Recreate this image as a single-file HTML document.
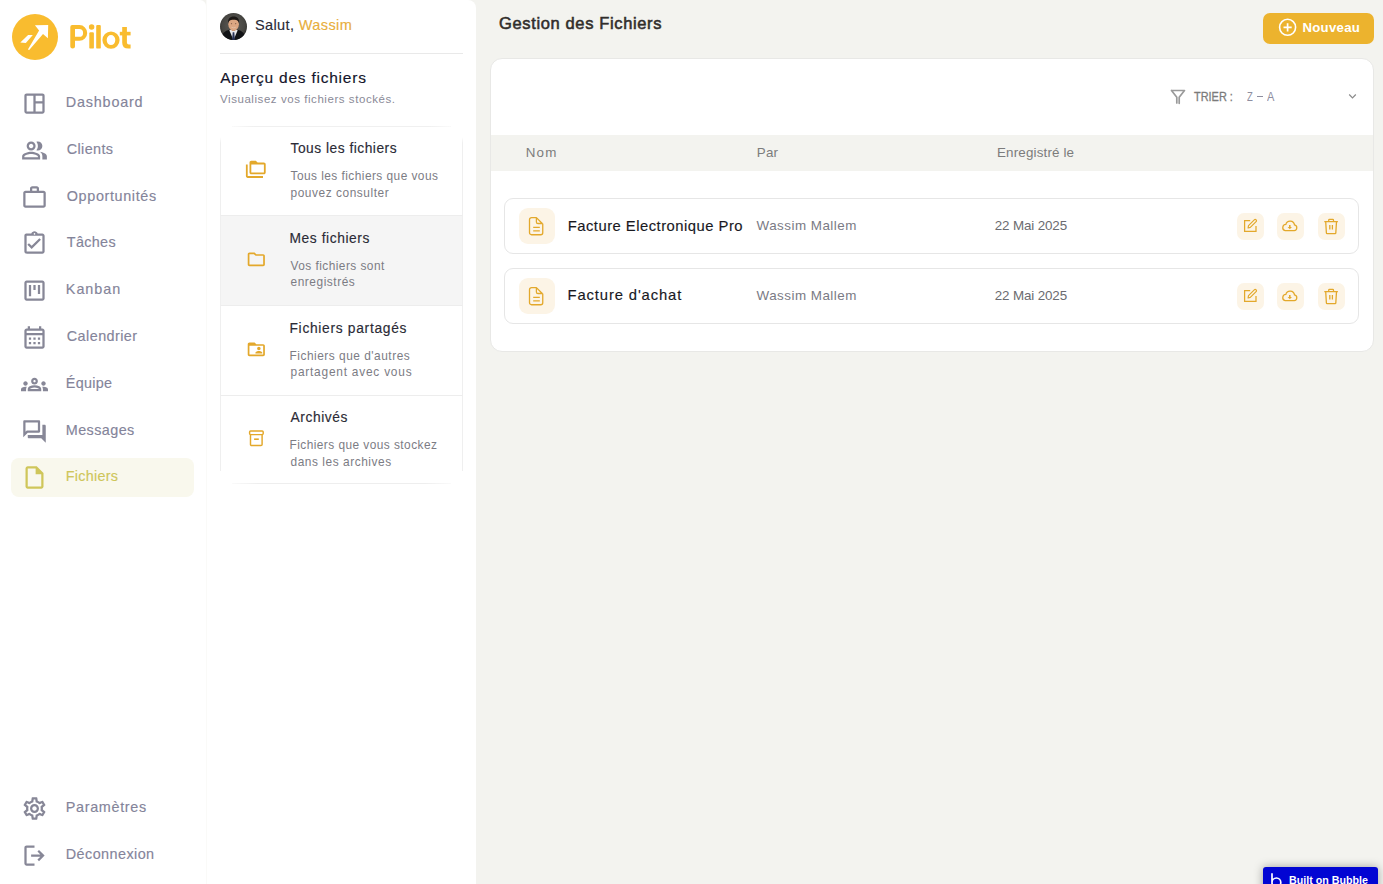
<!DOCTYPE html>
<html><head><meta charset="utf-8">
<style>
*{box-sizing:border-box;margin:0;padding:0}
html,body{width:1383px;height:884px;overflow:hidden}
body{background:#f3f3ef;position:relative;font-family:"Liberation Sans",sans-serif}
.a{position:absolute}
.t{position:absolute;white-space:nowrap;line-height:1}
svg{position:absolute;overflow:visible}
</style></head><body>
<div class="a" style="left:0;top:0;width:206px;height:884px;background:#fff;border-top-right-radius:6px"></div>
<div class="a" style="left:206px;top:0;width:270px;height:884px;background:#fff;border-top-right-radius:8px;border-left:1px solid #fafaf8"></div>
<svg style="left:12px;top:14px" width="46" height="46" viewBox="0 0 46 46">
<circle cx="23" cy="23" r="23" fill="#f9bc2f"/>
<path d="M22.9 11.2L36.2 10.9L35.9 24.2L31 20L17.2 35.9L15.9 35.4L27.1 16.6Z" fill="#fff"/>
<path d="M8.3 28.6L16.1 21.1L20.8 21.1L13.8 29.1Z" fill="#fff"/>
</svg>
<svg style="left:0;top:0" width="140" height="60" viewBox="0 0 140 60"><g fill="#f9bc2f">
<path fill-rule="evenodd" d="M70.3 46.6V27Q70.3 25.1 72.2 25.1H79.4A7.8 7.8 0 0 1 79.4 40.7H75V46.6Q75 48.6 72.7 48.6Q70.3 48.6 70.3 46.6ZM75 29V36.8H79.2A3.9 3.9 0 0 0 79.2 29Z"/>
<rect x="89.3" y="32.2" width="4.6" height="16.4" rx="1.2"/><circle cx="91.6" cy="26.9" r="2.75"/>
<rect x="96.2" y="24.9" width="4.6" height="23.7" rx="1.2"/>
<path fill-rule="evenodd" d="M102.4 40.1A8.6 8.7 0 1 0 119.6 40.1A8.6 8.7 0 1 0 102.4 40.1ZM106.7 40.1A4.3 5 0 1 0 115.3 40.1A4.3 5 0 1 0 106.7 40.1Z"/>
<path d="M122.2 26.9H126.9V42.6Q126.9 44.5 128.8 44.5H130.6V48.6H128.4Q122.2 48.6 122.2 42.4Z"/><rect x="119.8" y="31.8" width="10.8" height="3.6"/>
</g></svg>
<div class="a" style="left:11px;top:458px;width:183px;height:39px;border-radius:8px;background:#f9f8ed"></div>
<svg style="left:21.10px;top:90.00px" width="27" height="27" viewBox="0 0 24 24"><path fill="#878797" d="M5 21q-.825 0-1.413-.587Q3 19.825 3 19V5q0-.825.587-1.413Q4.175 3 5 3h14q.825 0 1.413.587Q21 4.175 21 5v14q0 .825-.587 1.413Q19.825 21 19 21Zm6-2V5H5v14Zm2 0h6v-7h-6Zm0-9h6V5h-6Z"/></svg>
<div class="t" style="left:65.80px;top:94.81px;font-size:14.4px;color:#84849a;font-weight:normal;letter-spacing:0.8px;-webkit-text-stroke:0.15px currentColor;">Dashboard</div>
<svg style="left:21.10px;top:136.80px" width="27" height="27" viewBox="0 0 24 24"><path fill="#878797" d="M16.67 13.13C18.04 14.06 19 15.32 19 17v3h4v-3c0-2.18-3.57-3.47-6.33-3.87zM15 12c2.21 0 4-1.79 4-4s-1.79-4-4-4c-.47 0-.91.1-1.33.24C14.5 5.27 15 6.58 15 8s-.5 2.73-1.33 3.76c.42.14.86.24 1.33.24zm-6 0c2.21 0 4-1.79 4-4s-1.790-4-4-4-4 1.79-4 4 1.79 4 4 4zm0-6c1.1 0 2 .9 2 2s-.9 2-2 2-2-.9-2-2 .9-2 2-2zm0 7c-2.67 0-8 1.34-8 4v3h16v-3c0-2.66-5.33-4-8-4zm6 5H3v-.99C3.2 16.29 6.3 15 9 15s5.8 1.29 6 2v1z"/></svg>
<div class="t" style="left:66.80px;top:141.81px;font-size:14.4px;color:#84849a;font-weight:normal;letter-spacing:0.367px;-webkit-text-stroke:0.15px currentColor;">Clients</div>
<svg style="left:21.10px;top:183.60px" width="27" height="27" viewBox="0 0 24 24"><path fill="#878797" d="M14 6V4h-4v2h4zM4 8v11h16V8H4zm16-2c1.11 0 2 .89 2 2v11c0 1.11-.89 2-2 2H4c-1.11 0-2-.89-2-2l.01-11c0-1.11.88-2 1.99-2h4V4c0-1.11.89-2 2-2h4c1.11 0 2 .89 2 2v2h4z"/></svg>
<div class="t" style="left:66.80px;top:188.81px;font-size:14.4px;color:#84849a;font-weight:normal;letter-spacing:0.627px;-webkit-text-stroke:0.15px currentColor;">Opportunités</div>
<svg style="left:21.10px;top:230.40px" width="27" height="27" viewBox="0 0 24 24"><path fill="#878797" d="M9.5 16.92L5.68 13.1l1.41-1.41 2.41 2.42 6.82-6.82 1.41 1.41zM19 3h-4.18C14.4 1.84 13.3 1 12 1c-1.3 0-2.4.84-2.82 2H5c-.14 0-.27.01-.4.04-.39.08-.74.28-1.01.55-.18.18-.33.4-.43.64-.1.23-.16.49-.16.77v14c0 .27.06.54.16.78s.25.45.43.64c.27.27.62.47 1.01.55.13.02.26.03.4.03h14c1.1 0 2-.9 2-2V5c0-1.1-.9-2-2-2zm-7-.25c.41 0 .75.34.75.75s-.34.75-.75.75-.75-.34-.75-.75.34-.75.75-.75zM19 19H5V5h14v14z"/></svg>
<div class="t" style="left:66.80px;top:234.81px;font-size:14.4px;color:#84849a;font-weight:normal;letter-spacing:0.32px;-webkit-text-stroke:0.15px currentColor;">Tâches</div>
<svg style="left:21.10px;top:277.20px" width="27" height="27" viewBox="0 0 24 24"><path fill="#878797" d="M19 3H5c-1.1 0-2 .9-2 2v14c0 1.1.9 2 2 2h14c1.1 0 2-.9 2-2V5c0-1.1-.9-2-2-2zm0 16H5V5h14v14zM7 7h2v10H7zm4 0h2v4.5h-2zm4 0h2v8h-2z"/></svg>
<div class="t" style="left:65.80px;top:281.81px;font-size:14.4px;color:#84849a;font-weight:normal;letter-spacing:0.98px;-webkit-text-stroke:0.15px currentColor;">Kanban</div>
<svg style="left:21.10px;top:324.00px" width="27" height="27" viewBox="0 0 24 24"><path fill="#878797" d="M19 4h-1V2h-2v2H8V2H6v2H5c-1.11 0-1.99.9-1.99 2L3 20c0 1.1.89 2 2 2h14c1.1 0 2-.9 2-2V6c0-1.1-.9-2-2-2zm0 16H5V10h14v10zm0-12H5V6h14v2zM9 14H7v-2h2v2zm4 0h-2v-2h2v2zm4 0h-2v-2h2v2zm-8 4H7v-2h2v2zm4 0h-2v-2h2v2zm4 0h-2v-2h2v2z"/></svg>
<div class="t" style="left:66.80px;top:328.81px;font-size:14.4px;color:#84849a;font-weight:normal;letter-spacing:0.433px;-webkit-text-stroke:0.15px currentColor;">Calendrier</div>
<svg style="left:21.10px;top:370.80px" width="27" height="27" viewBox="0 0 24 24"><path fill="#878797" d="M4 13c1.1 0 2-.9 2-2s-.9-2-2-2-2 .9-2 2 .9 2 2 2zm1.13 1.1c-.37-.06-.74-.1-1.13-.1-.99 0-1.93.21-2.78.58C.48 14.9 0 15.62 0 16.43V18h4.5v-1.61c0-.83.23-1.61.63-2.29zM20 13c1.1 0 2-.9 2-2s-.9-2-2-2-2 .9-2 2 .9 2 2 2zm4 3.43c0-.81-.48-1.53-1.22-1.850-.85-.37-1.79-.58-2.78-.58-.39 0-.76.04-1.13.1.4.68.63 1.46.63 2.29V18H24v-1.57zm-7.76-2.78c-1.17-.52-2.61-.9-4.24-.9-1.63 0-3.07.39-4.24.9C6.68 14.13 6 15.21 6 16.39V18h12v-1.61c0-1.18-.68-2.26-1.76-2.74zM8.07 16c.09-.23.13-.39.91-.69.97-.38 1.99-.56 3.02-.56s2.05.18 3.02.56c.77.3.81.46.91.69H8.07zM12 8c.55 0 1 .45 1 1s-.45 1-1 1-1-.45-1-1 .45-1 1-1m0-2c-1.66 0-3 1.34-3 3s1.34 3 3 3 3-1.34 3-3-1.34-3-3-3z"/></svg>
<div class="t" style="left:65.80px;top:375.81px;font-size:14.4px;color:#84849a;font-weight:normal;letter-spacing:0.3px;-webkit-text-stroke:0.15px currentColor;">Équipe</div>
<svg style="left:21.10px;top:417.60px" width="27" height="27" viewBox="0 0 24 24"><path fill="#878797" d="M15 4v7H5.17L4 12.17V4h11m1-2H3c-.55 0-1 .45-1 1v14l4-4h10c.55 0 1-.45 1-1V3c0-.55-.45-1-1-1zm5 4h-2v9H6v2c0 .55.45 1 1 1h11l4 4V7c0-.55-.45-1-1-1z"/></svg>
<div class="t" style="left:65.80px;top:422.81px;font-size:14.4px;color:#84849a;font-weight:normal;letter-spacing:0.414px;-webkit-text-stroke:0.15px currentColor;">Messages</div>
<svg style="left:21.10px;top:464.40px" width="27" height="27" viewBox="0 0 24 24"><path fill="#cfc65a" d="M14 2H6c-1.1 0-1.99.9-1.99 2L4 20c0 1.1.89 2 2 2h12c1.1 0 2-.9 2-2V8l-6-6zM6 20V4h7v5h5v11H6z"/></svg>
<div class="t" style="left:65.80px;top:468.81px;font-size:14.4px;color:#cfc65a;font-weight:normal;letter-spacing:0.271px;-webkit-text-stroke:0.15px currentColor;">Fichiers</div>
<svg style="left:21.10px;top:794.70px" width="27" height="27" viewBox="0 0 24 24"><path fill="#878797" d="M19.43 12.98c.04-.32.07-.64.07-.98 0-.34-.03-.66-.07-.98l2.11-1.65c.19-.15.24-.42.12-.64l-2-3.46c-.09-.16-.26-.25-.44-.25-.06 0-.12.01-.17.03l-2.49 1c-.52-.4-1.08-.73-1.69-.98l-.38-2.65C14.46 2.18 14.25 2 14 2h-4c-.25 0-.46.18-.49.42l-.38 2.65c-.61.25-1.17.59-1.69.98l-2.490-1c-.06-.02-.12-.03-.18-.03-.17 0-.34.09-.43.25l-2 3.46c-.13.22-.07.49.12.64l2.11 1.65c-.04.32-.07.65-.07.98 0 .33.03.66.07.98l-2.11 1.65c-.19.15-.24.42-.12.64l2 3.46c.09.16.26.25.44.25.06 0 .12-.01.17-.03l2.49-1c.52.4 1.08.73 1.69.98l.38 2.65c.03.24.24.42.49.42h4c.25 0 .46-.18.49-.42l.38-2.65c.61-.25 1.17-.59 1.69-.98l2.49 1c.06.02.12.03.18.03.17 0 .34-.09.43-.25l2-3.46c.12-.22.07-.49-.12-.64l-2.11-1.65zm-1.98-1.71c.04.31.05.52.05.73 0 .21-.02.43-.05.73l-.14 1.13.89.7 1.08.84-.7 1.21-1.27-.51-1.04-.42-.9.68c-.43.32-.84.56-1.25.73l-1.06.43-.16 1.13-.2 1.35h-1.4l-.19-1.35-.16-1.13-1.06-.43c-.43-.18-.83-.41-1.230-.71l-.91-.7-1.06.43-1.27.51-.7-1.21 1.08-.84.89-.7-.14-1.13c-.03-.31-.05-.54-.05-.74s.02-.43.05-.73l.14-1.13-.89-.7-1.08-.84.7-1.21 1.27.51 1.04.42.9-.68c.43-.32.84-.56 1.25-.73l1.06-.43.16-1.13.2-1.35h1.39l.19 1.35.16 1.13 1.06.43c.43.18.83.41 1.23.71l.91.7 1.06-.43 1.27-.51.7 1.21-1.07.85-.89.7.14 1.13zM12 8c-2.21 0-4 1.79-4 4s1.79 4 4 4 4-1.79 4-4-1.79-4-4-4zm0 6c-1.1 0-2-.9-2-2s.9-2 2-2 2 .9 2 2-.9 2-2 2z"/></svg>
<div class="t" style="left:65.80px;top:799.81px;font-size:14.4px;color:#84849a;font-weight:normal;letter-spacing:0.667px;-webkit-text-stroke:0.15px currentColor;">Paramètres</div>
<svg style="left:21.10px;top:841.80px" width="27" height="27" viewBox="0 0 24 24"><path fill="#878797" d="M5 21q-.825 0-1.413-.587Q3 19.825 3 19V5q0-.825.587-1.413Q4.175 3 5 3h7v2H5v14h7v2Zm11-4-1.375-1.45 2.55-2.55H9v-2h8.175l-2.55-2.55L16 7l5 5Z"/></svg>
<div class="t" style="left:65.80px;top:846.81px;font-size:14.4px;color:#84849a;font-weight:normal;letter-spacing:0.43px;-webkit-text-stroke:0.15px currentColor;">Déconnexion</div>
<svg style="left:220px;top:13px" width="27" height="27" viewBox="0 0 27 27">
<defs><clipPath id="av"><circle cx="13.5" cy="13.5" r="13.5"/></clipPath>
<radialGradient id="avg" cx="0.5" cy="0.45" r="0.6"><stop offset="0" stop-color="#5e5d58"/><stop offset="0.7" stop-color="#474642"/><stop offset="1" stop-color="#262624"/></radialGradient></defs>
<g>
<circle cx="13.5" cy="13.5" r="13.5" fill="url(#avg)"/>
<g clip-path="url(#av)">
<path d="M1 27C1.5 20.5 5 17.8 9.5 16.8L13.5 18L17.5 16.8C22 17.8 25.5 20.5 26 27Z" fill="#121316"/>
<path d="M9.3 17.2L13.5 27L17.7 17.2L15.5 16.5H11.5Z" fill="#e9e9ec"/>
<path d="M12.7 19.2H14.3L14.9 27H12.1Z" fill="#283256"/>
<rect x="11.8" y="15" width="3.4" height="3" fill="#c89474"/>
<ellipse cx="13.6" cy="11.2" rx="5.3" ry="6.4" fill="#dba682"/>
<path d="M8.1 10.5C7.6 6 9.8 3.6 13.6 3.6S19.6 6 19.1 10.5C18.6 8.4 17.5 6.8 13.6 6.8S8.6 8.4 8.1 10.5Z" fill="#1b1715"/>
<ellipse cx="11.5" cy="10.8" rx="0.7" ry="0.45" fill="#5a3c30"/><ellipse cx="15.7" cy="10.8" rx="0.7" ry="0.45" fill="#5a3c30"/>
<path d="M11.4 14.2Q13.6 15.6 15.8 14.2" fill="none" stroke="#efe0d4" stroke-width="0.6" opacity="0.7"/>
</g></g></svg>
<div class="t" style="left:254.90px;top:17.73px;font-size:14.5px;color:#2a2a36;font-weight:normal;letter-spacing:0.4px;-webkit-text-stroke:0.15px currentColor;">Salut, <span style="color:#e8ae3c">Wassim</span></div>
<div class="a" style="left:220px;top:53px;width:243px;height:1px;background:#e9e9e9"></div>
<div class="t" style="left:220.20px;top:69.88px;font-size:15.5px;color:#14142a;font-weight:normal;letter-spacing:0.772px;-webkit-text-stroke:0.15px currentColor;">Aperçu des fichiers</div>
<div class="t" style="left:220.00px;top:94.27px;font-size:11.5px;color:#8a8a97;font-weight:normal;letter-spacing:0.558px;">Visualisez vos fichiers stockés.</div>
<div class="a" style="left:232px;top:126px;width:219px;height:1px;background:linear-gradient(90deg,#fafafa,#f0f0f0 10%,#f0f0f0 90%,#fafafa)"></div>
<div class="a" style="left:232px;top:483px;width:219px;height:1px;background:linear-gradient(90deg,#fafafa,#f0f0f0 10%,#f0f0f0 90%,#fafafa)"></div>
<div class="a" style="left:220px;top:137px;width:1px;height:78.3px;background:linear-gradient(#fff,#efefef 6px)"></div>
<div class="a" style="left:462px;top:137px;width:1px;height:78.3px;background:linear-gradient(#fff,#efefef 6px)"></div>
<div class="t" style="left:290.50px;top:142.32px;font-size:13.8px;color:#2b2b36;font-weight:normal;letter-spacing:0.494px;-webkit-text-stroke:0.15px currentColor;">Tous les fichiers</div>
<div class="t" style="left:290.50px;top:170.93px;font-size:11.9px;color:#7c7c84;font-weight:normal;letter-spacing:0.452px;">Tous les fichiers que vous</div>
<div class="t" style="left:290.50px;top:187.93px;font-size:11.9px;color:#7c7c84;font-weight:normal;letter-spacing:0.553px;">pouvez consulter</div>
<div class="a" style="left:220px;top:215.3px;width:243px;height:89.5px;background:#f5f5f5;border-left:1px solid #efefef;border-right:1px solid #efefef;border-top:1px solid #ededed"></div>
<div class="t" style="left:289.50px;top:232.32px;font-size:13.8px;color:#2b2b36;font-weight:normal;letter-spacing:0.564px;-webkit-text-stroke:0.15px currentColor;">Mes fichiers</div>
<div class="t" style="left:290.50px;top:260.93px;font-size:11.9px;color:#7c7c84;font-weight:normal;letter-spacing:0.45px;">Vos fichiers sont</div>
<div class="t" style="left:290.50px;top:276.93px;font-size:11.9px;color:#7c7c84;font-weight:normal;letter-spacing:0.55px;">enregistrés</div>
<div class="a" style="left:220px;top:304.8px;width:243px;height:90.2px;background:#fff;border-left:1px solid #efefef;border-right:1px solid #efefef;border-top:1px solid #ededed"></div>
<div class="t" style="left:289.50px;top:322.32px;font-size:13.8px;color:#2b2b36;font-weight:normal;letter-spacing:0.694px;-webkit-text-stroke:0.15px currentColor;">Fichiers partagés</div>
<div class="t" style="left:289.50px;top:350.93px;font-size:11.9px;color:#7c7c84;font-weight:normal;letter-spacing:0.51px;">Fichiers que d'autres</div>
<div class="t" style="left:290.50px;top:366.93px;font-size:11.9px;color:#7c7c84;font-weight:normal;letter-spacing:0.778px;">partagent avec vous</div>
<div class="a" style="left:220px;top:395.0px;width:243px;height:76.0px;background:#fff;border-left:1px solid #efefef;border-right:1px solid #efefef;border-top:1px solid #ededed"></div>
<div class="t" style="left:290.50px;top:411.32px;font-size:13.8px;color:#2b2b36;font-weight:normal;letter-spacing:0.586px;-webkit-text-stroke:0.15px currentColor;">Archivés</div>
<div class="t" style="left:289.50px;top:439.93px;font-size:11.9px;color:#7c7c84;font-weight:normal;letter-spacing:0.442px;">Fichiers que vous stockez</div>
<div class="t" style="left:290.50px;top:456.93px;font-size:11.9px;color:#7c7c84;font-weight:normal;letter-spacing:0.544px;">dans les archives</div>
<svg style="left:245.10px;top:159.00px" width="21.6" height="21.6" viewBox="0 0 24 24"><path fill="#e3a82b" d="M3 6H1v13c0 1.1.9 2 2 2h17v-2H3V6zM21 4h-7l-2-2H7c-1.1 0-1.99.9-1.99 2L5 15c0 1.1.9 2 2 2h14c1.1 0 2-.9 2-2V6c0-1.1-.9-2-2-2zm0 11H7V6h14v9z"/></svg>
<svg style="left:246.10px;top:248.50px" width="20.6" height="20.6" viewBox="0 0 24 24"><path fill="#e3a82b" d="M9.17 6l2 2H20v10H4V6h5.17M10 4H4c-1.1 0-1.99.9-1.99 2L2 18c0 1.1.9 2 2 2h16c1.1 0 2-.9 2-2V8c0-1.1-.9-2-2-2h-8l-2-2z"/></svg>
<svg style="left:246.10px;top:338.60px" width="20.6" height="20.6" viewBox="0 0 24 24"><path fill="#e3a82b" d="M20 6h-8l-2-2H4c-1.1 0-1.99.9-1.99 2L2 18c0 1.1.9 2 2 2h16c1.1 0 2-.9 2-2V8c0-1.1-.9-2-2-2zm0 12H4V8h16v10zm-5-5c1.1 0 2-.9 2-2s-.9-2-2-2-2 .9-2 2 .9 2 2 2zm-4 4h8v-1c0-1.33-2.67-2-4-2s-4 .67-4 2v1z"/></svg>
<svg style="left:248px;top:429px" width="17" height="18" viewBox="0 0 17 18"><rect x="1.6" y="1.9" width="13.6" height="3.7" rx="1" fill="none" stroke="#e3a82b" stroke-width="1.45"/><path d="M2.5 5.6V15.4A1.1 1.1 0 0 0 3.6 16.5H13A1.1 1.1 0 0 0 14.1 15.4V5.6" fill="none" stroke="#e3a82b" stroke-width="1.45"/><rect x="6.1" y="9.4" width="4.7" height="1.6" fill="#e3a82b"/></svg>
<div class="a" style="left:219px;top:471px;width:245px;height:12px;background:#fff"></div>
<div class="a" style="left:232px;top:483px;width:219px;height:1px;background:linear-gradient(90deg,#fafafa,#eeeeee 12%,#eeeeee 88%,#fafafa)"></div>
<div class="t" style="left:499.00px;top:15.03px;font-size:16.5px;color:#302d2b;font-weight:normal;letter-spacing:0.637px;-webkit-text-stroke:0.55px currentColor;">Gestion des Fichiers</div>
<div class="a" style="left:1263px;top:13px;width:111px;height:31px;border-radius:7px;background:#ecb32e"></div>
<svg style="left:1278px;top:18px" width="19" height="19" viewBox="0 0 19 19"><circle cx="9.6" cy="9.3" r="8" fill="none" stroke="#fff" stroke-width="1.6"/><path d="M9.6 5.2v8.2M5.5 9.3h8.2" stroke="#fff" stroke-width="1.7"/></svg>
<div class="t" style="left:1302.50px;top:20.83px;font-size:13.2px;color:#ffffff;font-weight:bold;letter-spacing:0.267px;">Nouveau</div>
<div class="a" style="left:489.8px;top:58px;width:884.6px;height:294px;border-radius:12px;background:#fff;border:1px solid #e8e8e6;overflow:hidden"><div class="a" style="left:0;top:76px;width:100%;height:36px;background:#f3f3ef"></div></div>
<svg style="left:1170px;top:89px" width="16" height="16" viewBox="0 0 16 16"><path d="M1.5 1.5h13L9.2 8.2V14.3M6.8 14V8.2L1.5 1.5" fill="none" stroke="#9a9a9a" stroke-width="1.7" stroke-linejoin="round" stroke-linecap="round"/></svg>
<div class="t" style="left:1194.20px;top:90.00px;font-size:13px;color:#7b7b7b;font-weight:normal;letter-spacing:0px;transform:scaleX(0.8413);transform-origin:0 0;-webkit-text-stroke:0.3px currentColor;">TRIER :</div>
<div class="t" style="left:1247.00px;top:91.33px;font-size:12.6px;color:#8e8ea0;font-weight:normal;letter-spacing:0px;transform:scaleX(0.75);transform-origin:0 0;">Z</div>
<div class="t" style="left:1267.20px;top:91.33px;font-size:12.6px;color:#8e8ea0;font-weight:normal;letter-spacing:0px;transform:scaleX(0.8778);transform-origin:0 0;">A</div>
<div class="a" style="left:1257.2px;top:95.9px;width:5.7px;height:1.2px;background:#8e8ea0"></div>
<svg style="left:1348px;top:93px" width="9" height="7" viewBox="0 0 9 7"><path d="M1.2 1.5L4.5 4.8L7.8 1.5" fill="none" stroke="#8a8a8a" stroke-width="1.2"/></svg>
<div class="t" style="left:525.80px;top:145.66px;font-size:13.4px;color:#7c7c7c;font-weight:normal;letter-spacing:1.15px;">Nom</div>
<div class="t" style="left:756.80px;top:145.66px;font-size:13.4px;color:#7c7c7c;font-weight:normal;letter-spacing:0.2px;">Par</div>
<div class="t" style="left:997.00px;top:145.66px;font-size:13.4px;color:#7c7c7c;font-weight:normal;letter-spacing:0.158px;">Enregistré le</div>
<div class="a" style="left:504px;top:198.0px;width:855px;height:56px;border-radius:9px;background:#fff;border:1px solid #e6e6e6"></div>
<div class="a" style="left:519px;top:208.0px;width:36px;height:36px;border-radius:9px;background:#fcf4e6"></div>
<svg style="left:527px;top:216.0px" width="18" height="21" viewBox="0 0 18 21"><path d="M4.5 1.65H9.4L15.75 8V16.75A2 2 0 0 1 13.75 18.75H4.5A2 2 0 0 1 2.5 16.75V3.65A2 2 0 0 1 4.5 1.65Z M9.4 1.65V5.9A1.6 1.6 0 0 0 11 7.5H15.75 M6.2 11.4H12.8 M6.2 14.9H12.8" fill="none" stroke="#e3a82b" stroke-width="1.3" stroke-linejoin="round"/></svg>
<div class="t" style="left:567.70px;top:219.47px;font-size:14.8px;color:#19191f;font-weight:normal;letter-spacing:0.487px;-webkit-text-stroke:0.15px currentColor;">Facture Electronique Pro</div>
<div class="t" style="left:756.50px;top:218.66px;font-size:13.4px;color:#7a7a84;font-weight:normal;letter-spacing:0.492px;">Wassim Mallem</div>
<div class="t" style="left:994.80px;top:218.66px;font-size:13.4px;color:#6b6b70;font-weight:normal;letter-spacing:-0.14px;">22 Mai 2025</div>
<div class="a" style="left:1237px;top:213.0px;width:27px;height:27px;border-radius:7px;background:#fcf4e6"></div>
<div class="a" style="left:1277px;top:213.0px;width:27px;height:27px;border-radius:7px;background:#fcf4e6"></div>
<div class="a" style="left:1318px;top:213.0px;width:27px;height:27px;border-radius:7px;background:#fcf4e6"></div>
<svg style="left:1243px;top:218.0px" width="15" height="15" viewBox="0 0 15 15"><path d="M7.2 2.6H1.6V13.4H13V8" fill="none" stroke="#e3a82b" stroke-width="1.25"/><path d="M5.1 10L5.5 7.6L11.3 1.8A1.2 1.2 0 0 1 13.1 3.6L7.3 9.4Z" fill="none" stroke="#e3a82b" stroke-width="1.2" stroke-linejoin="round"/></svg>
<svg style="left:1281.3px;top:219.8px" width="17.2" height="11.4" viewBox="0 -0.6 17.4 11.6"><path d="M4.2 10.3H13.4A3 3 0 0 0 13.7 4.4A4.5 4.5 0 0 0 4.9 3.9A3.25 3.25 0 0 0 4.2 10.3Z" fill="none" stroke="#e3a82b" stroke-width="1.3"/><path d="M8.9 4.6V7.2" stroke="#e3a82b" stroke-width="1.6"/><path d="M6.7 6.6L8.9 8.8L11.1 6.6Z" fill="#e3a82b"/></svg>
<svg style="left:1323px;top:218.0px" width="16" height="17" viewBox="0 0 16 17"><path d="M1.3 3.6H14.9M5.7 3.6V2.2A0.8 0.8 0 0 1 6.5 1.4H9.7A0.8 0.8 0 0 1 10.5 2.2V3.6M2.7 3.6L3.4 14.9A0.8 0.8 0 0 0 4.2 15.7H12A0.8 0.8 0 0 0 12.8 14.9L13.5 3.6M6.8 7V11.6M9.4 7V11.6" fill="none" stroke="#e3a82b" stroke-width="1.3"/></svg>
<div class="a" style="left:504px;top:268.0px;width:855px;height:56px;border-radius:9px;background:#fff;border:1px solid #e6e6e6"></div>
<div class="a" style="left:519px;top:278.0px;width:36px;height:36px;border-radius:9px;background:#fcf4e6"></div>
<svg style="left:527px;top:286.0px" width="18" height="21" viewBox="0 0 18 21"><path d="M4.5 1.65H9.4L15.75 8V16.75A2 2 0 0 1 13.75 18.75H4.5A2 2 0 0 1 2.5 16.75V3.65A2 2 0 0 1 4.5 1.65Z M9.4 1.65V5.9A1.6 1.6 0 0 0 11 7.5H15.75 M6.2 11.4H12.8 M6.2 14.9H12.8" fill="none" stroke="#e3a82b" stroke-width="1.3" stroke-linejoin="round"/></svg>
<div class="t" style="left:567.50px;top:288.47px;font-size:14.8px;color:#19191f;font-weight:normal;letter-spacing:0.879px;-webkit-text-stroke:0.15px currentColor;">Facture d'achat</div>
<div class="t" style="left:756.50px;top:288.66px;font-size:13.4px;color:#7a7a84;font-weight:normal;letter-spacing:0.492px;">Wassim Mallem</div>
<div class="t" style="left:994.80px;top:288.66px;font-size:13.4px;color:#6b6b70;font-weight:normal;letter-spacing:-0.14px;">22 Mai 2025</div>
<div class="a" style="left:1237px;top:283.0px;width:27px;height:27px;border-radius:7px;background:#fcf4e6"></div>
<div class="a" style="left:1277px;top:283.0px;width:27px;height:27px;border-radius:7px;background:#fcf4e6"></div>
<div class="a" style="left:1318px;top:283.0px;width:27px;height:27px;border-radius:7px;background:#fcf4e6"></div>
<svg style="left:1243px;top:288.0px" width="15" height="15" viewBox="0 0 15 15"><path d="M7.2 2.6H1.6V13.4H13V8" fill="none" stroke="#e3a82b" stroke-width="1.25"/><path d="M5.1 10L5.5 7.6L11.3 1.8A1.2 1.2 0 0 1 13.1 3.6L7.3 9.4Z" fill="none" stroke="#e3a82b" stroke-width="1.2" stroke-linejoin="round"/></svg>
<svg style="left:1281.3px;top:289.8px" width="17.2" height="11.4" viewBox="0 -0.6 17.4 11.6"><path d="M4.2 10.3H13.4A3 3 0 0 0 13.7 4.4A4.5 4.5 0 0 0 4.9 3.9A3.25 3.25 0 0 0 4.2 10.3Z" fill="none" stroke="#e3a82b" stroke-width="1.3"/><path d="M8.9 4.6V7.2" stroke="#e3a82b" stroke-width="1.6"/><path d="M6.7 6.6L8.9 8.8L11.1 6.6Z" fill="#e3a82b"/></svg>
<svg style="left:1323px;top:288.0px" width="16" height="17" viewBox="0 0 16 17"><path d="M1.3 3.6H14.9M5.7 3.6V2.2A0.8 0.8 0 0 1 6.5 1.4H9.7A0.8 0.8 0 0 1 10.5 2.2V3.6M2.7 3.6L3.4 14.9A0.8 0.8 0 0 0 4.2 15.7H12A0.8 0.8 0 0 0 12.8 14.9L13.5 3.6M6.8 7V11.6M9.4 7V11.6" fill="none" stroke="#e3a82b" stroke-width="1.3"/></svg>
<div class="a" style="left:1263px;top:867px;width:115px;height:30px;border-radius:3px;background:#0205d3;box-shadow:0 0 10px rgba(0,0,0,0.35)"></div>
<svg style="left:1270px;top:873px" width="13" height="15" viewBox="0 0 13 15"><path d="M2 0.3V13M2 9.4a4.4 4.4 0 1 0 8.8 0a4.4 4.4 0 1 0 -8.8 0" fill="none" stroke="#fff" stroke-width="1.7"/></svg>
<div class="t" style="left:1289.30px;top:875.26px;font-size:11.5px;color:#ffffff;font-weight:bold;letter-spacing:0px;transform:scaleX(0.9294);transform-origin:0 0;">Built on Bubble</div>
</body></html>
